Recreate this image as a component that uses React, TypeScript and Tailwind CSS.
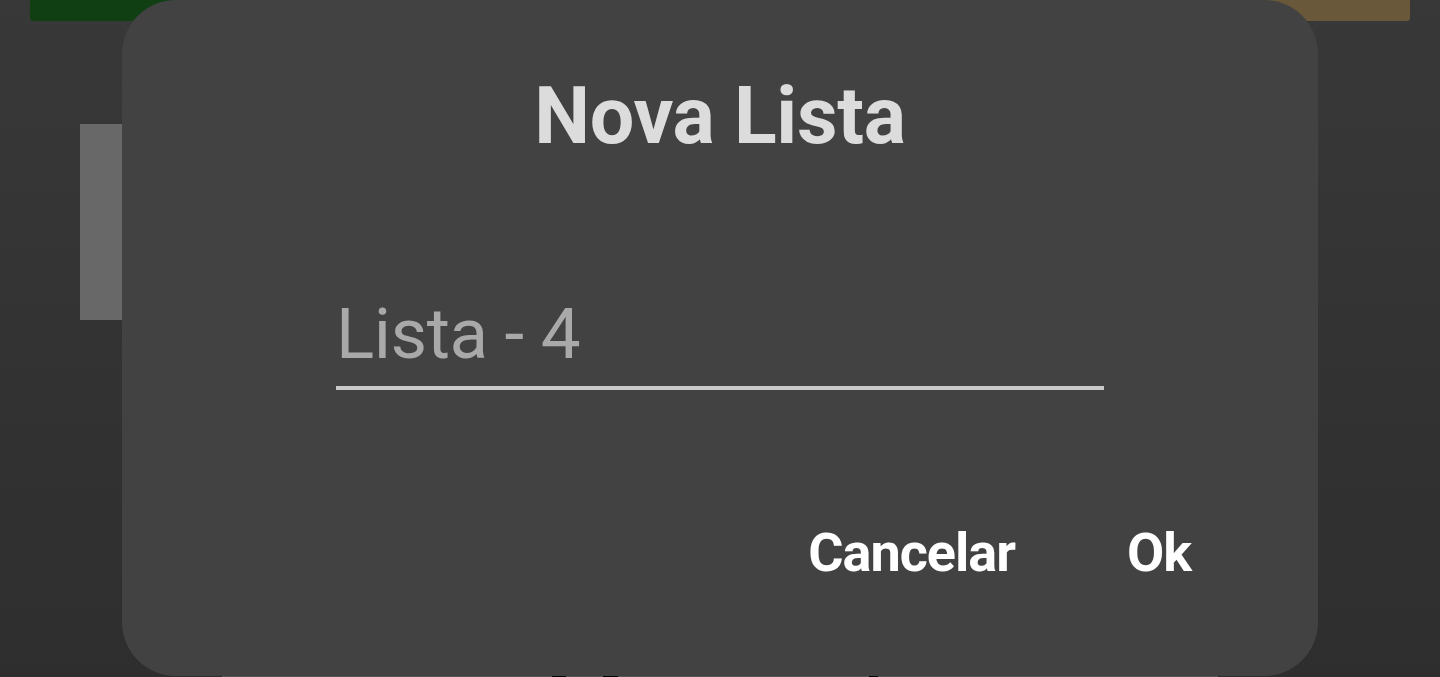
import React from "react";

export default function App() {
  const font = { fontFamily: "Roboto, 'Noto Sans', sans-serif" };
  return (
    <div
      className="relative w-[1440px] h-[677px] overflow-hidden bg-gradient-to-b from-[#383838] to-[#2e2e2e]"
      style={font}
    >
      {/* background app content */}
      <div className="flex h-full flex-col">
        <div className="flex h-[21px] gap-[40px] px-[30px]">
          <div className="flex-1 rounded-b-[3px] bg-[#0f3f12]" />
          <div className="flex-1 rounded-b-[3px] bg-[#6a583b]" />
        </div>
        <div className="ml-[80px] mt-[103px] h-[196px] w-[120px] bg-[#686868]" />
        <div className="mt-auto flex h-px">
          <div className="ml-[222px] flex w-[996px] bg-[#555555]">
            <div className="ml-[330px] w-[14px] bg-black" />
            <div className="ml-[37px] w-[15px] bg-black" />
            <div className="ml-[251px] w-[9px] bg-black" />
          </div>
        </div>
      </div>

      {/* dialog overlay */}
      <div className="absolute left-[122px] top-0 flex h-[676px] w-[1196px] flex-col items-center rounded-[54px] bg-[#424242]">
        <h1 className="mt-[76px] text-[79px] font-bold leading-[80px] tracking-[-0.3px] text-[#dcdcdc]">
          Nova Lista
        </h1>
        <div className="mt-[142px] w-[768px] border-b-4 border-[#c8c8c8] pb-[16px]">
          <div className="text-[71px] leading-[72px] tracking-[-0.5px] text-[#a9a9a9]">
            Lista - 4
          </div>
        </div>
        <div className="mt-[135px] flex w-full justify-end gap-[112px] pr-[127px] text-[54px] font-bold leading-[55px] tracking-[-1px] text-white">
          <span>Cancelar</span>
          <span>Ok</span>
        </div>
      </div>
    </div>
  );
}
